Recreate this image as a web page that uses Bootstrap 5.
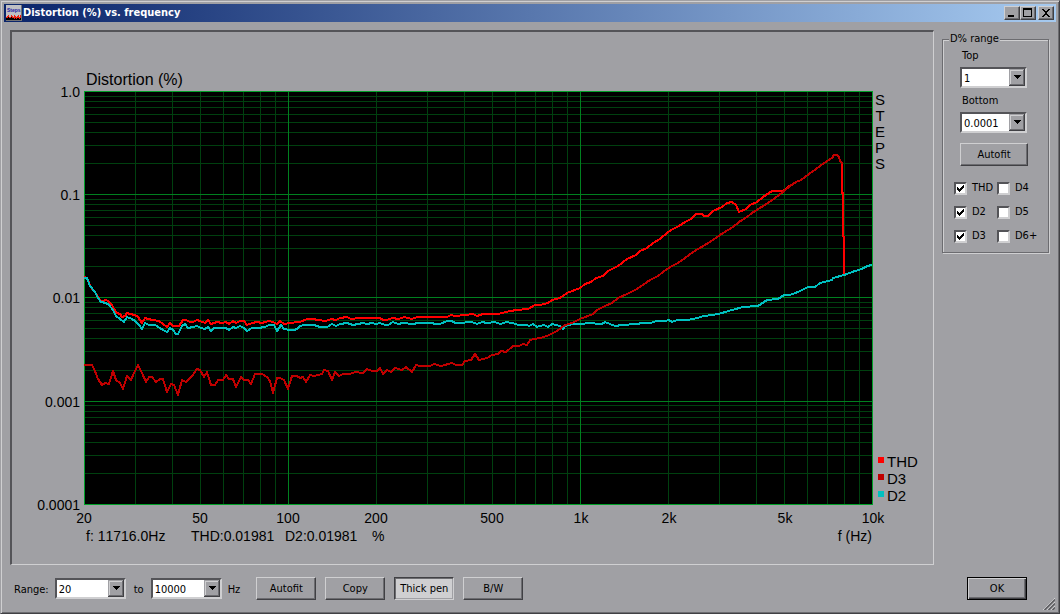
<!DOCTYPE html>
<html lang="en">
<head>
<meta charset="utf-8">
<meta name="viewport" content="width=device-width, initial-scale=1">
<title>Distortion (%) vs. frequency</title>
<link href="https://cdn.jsdelivr.net/npm/bootstrap@5.3.0/dist/css/bootstrap.min.css" rel="stylesheet">
<style>
  :root { --face: #a0a0a4; --light: #cfcfd1; --shade: #6c6c70; --dark: #404044; }
  body {
    background: var(--face); color: #000;
    font-family: "DejaVu Sans Condensed", "DejaVu Sans", sans-serif;
    font-size: 11px; line-height: 14px;
    border: 1px solid; border-color: var(--face) var(--dark) var(--dark) var(--face);
    box-shadow: inset 1px 1px 0 var(--light), inset -1px -1px 0 var(--shade);
    padding: 3px;
  }
  .titlebar { height: 18px; padding: 0 2px; background: linear-gradient(to right, #0a246a, #a6caf0); }
  .titlebar h1 { font-size: 11px; line-height: 18px; font-weight: 700; color: #fff; margin: 0 0 0 1px; }
  .btn-face {
    background: var(--face); color: #000; border: 1px solid; border-radius: 0; padding: 0;
    border-color: var(--light) var(--dark) var(--dark) var(--light);
    box-shadow: inset -1px -1px 0 var(--shade); font-size: 11px; line-height: 14px;
  }
  .cap-btn { width: 16px; height: 14px; }
  .cap-btn svg { display: block; }
  .cap-close { margin-left: 2px; }
  .push { width: 60px; height: 23px; }
  .push.active {
    background: var(--light);
    border-color: var(--dark) var(--light) var(--light) var(--dark);
    box-shadow: inset 1px 1px 0 var(--shade), inset -1px -1px 0 var(--face);
  }
  .push.standard { border-color: #000; box-shadow: inset 1px 1px 0 var(--light), inset -1px -1px 0 var(--dark), inset -2px -2px 0 var(--shade); }
  .plot {
    border: solid; border-width: 2px 1px 1px 2px;
    border-color: #545458 var(--light) var(--light) #545458; min-width: 0;
  }
  .plot svg { font-family: "Liberation Sans", Arial, sans-serif; font-size: 14px; font-kerning: none; }
  .plot .caption { font-size: 16px; }
  .plot .legend-text { font-size: 15px; }
  .content-row { gap: 8px; padding: 8px 7px 0 6px; }
  .side { width: 107px; margin-top: 2px; }
  .group { border: 1px solid var(--shade); box-shadow: 1px 1px 0 var(--light), inset 1px 1px 0 var(--light); padding: 3px 11px 9px; }
  .group legend { float: none; width: auto; margin: 0 0 0 -5px; padding: 0 1px; font-size: 11px; line-height: 14px; background: var(--face); }
  .combo {
    appearance: none; border: 2px solid; border-radius: 0; outline: none;
    border-color: #545458 var(--light) var(--light) #545458;
    color: #000; font-size: 11px; line-height: 14px; height: 21px; width: 71px; padding: 2px 17px 0 2px;
    background: #fff url("data:image/svg+xml,%3Csvg xmlns='http://www.w3.org/2000/svg' width='16' height='17' shape-rendering='crispEdges'%3E%3Cpath fill='%23a0a0a4' d='M0 0h16v17H0z'/%3E%3Cpath fill='%23cfcfd1' d='M1 1h13v1H2v13H1z'/%3E%3Cpath fill='%236c6c70' d='M14 1h1v15H1v-1h13z'/%3E%3Cpath fill='%23404044' d='M15 0h1v17H0v-1h15z'/%3E%3Cpath d='M5 6h7v1H5zM6 7h5v1H6zM7 8h3v1H7zM8 9h1v1H8z'/%3E%3C/svg%3E") no-repeat right center;
  }
  .side-controls { padding: 0 6px; }
  .side-controls label { margin-bottom: 4px; padding-left: 2px; }
  .side-controls .combo { width: 67px; margin-bottom: 6px; }
  .side-controls .push { width: 68px; margin-top: 4px; }
  .ticks { display: grid; grid-template-columns: 43px auto; row-gap: 10px; margin: 15px -6px 0 0; }
  .ticks label { gap: 5px; }
  .tick {
    appearance: none; width: 13px; height: 13px; margin: 0; flex: none; background: #fff center no-repeat;
    border: 2px solid; border-color: #545458 var(--light) var(--light) #545458;
  }
  .tick:checked { background-image: url("data:image/svg+xml,%3Csvg xmlns='http://www.w3.org/2000/svg' width='9' height='9' shape-rendering='crispEdges'%3E%3Cpath d='M1 3h1v3H1zM2 4h1v3H2zM3 5h1v3H3zM4 4h1v3H4zM5 3h1v3H5zM6 2h1v3H6zM7 1h1v3H7z'/%3E%3C/svg%3E"); }
  .toolbar { padding: 12px 29px 0 10px; }
  .range { gap: 6px; }
  .range label[for="until"] { margin: 0 1px 0 2px; }
  .range label, .range span { padding-top: 2px; }
  .actions { gap: 9px; margin-left: 16px; }
  .grip { position: absolute; right: 4px; bottom: 3px; }
</style>
</head>
<body class="min-vh-100 position-relative">
<header class="titlebar d-flex align-items-center">
  <svg width="16" height="16" viewBox="0 0 16 16" aria-hidden="true">
    <path fill="#c0c0c4" d="M0 0h16v16H0z"/>
    <text x="1" y="7" font-family="Liberation Sans" font-size="5" font-weight="700" fill="#2020a0">Steps</text>
    <path fill="#000" d="M0 12h15v3H0z"/>
    <path fill="#f02010" d="M0 12h1v-1h1v-1h1v2h2v-2h1v1h1v1h1v-2h1v1h1v1h1v-1h1v-1h1v2h1v-2h1v3h-1v1h-1v-1h-2v1h-1v-1H9v1H8v-1H6v-1H5v1H3v-1H2v1H0z"/>
    <path fill="none" stroke="#707074" shape-rendering="crispEdges" d="M0 15.500h15.500V0"/>
  </svg>
  <h1 class="flex-grow-1">Distortion (%) vs. frequency</h1>
  <button type="button" class="btn-face cap-btn" aria-label="Minimize"><svg width="14" height="12" shape-rendering="crispEdges"><path d="M3 8h6v2H3z"/></svg></button>
  <button type="button" class="btn-face cap-btn" aria-label="Maximize"><svg width="14" height="12" shape-rendering="crispEdges"><path fill-rule="evenodd" d="M2 1h9v9H2zM3 3v6h7V3z"/></svg></button>
  <button type="button" class="btn-face cap-btn cap-close" aria-label="Close"><svg width="14" height="12" shape-rendering="crispEdges"><path d="M3 2h2v1h1v1h2V3h1V2h2v1h-1v1H9v1H8v2h1v1h1v1h1v1H9V9H8V8H6v1H5v1H3V9h1V8h1V7h1V5H5V4H4V3H3z"/></svg></button>
</header>

<main class="content-row d-flex align-items-start">
  <section class="plot flex-grow-1">
    <svg class="d-block w-100 h-auto" viewBox="12 32 921 532" role="img" aria-label="Distortion versus frequency">
      <path d="M84 91h789v414H84z"/>
      <g id="grid" shape-rendering="crispEdges" fill="none"></g>
      <g id="traces" shape-rendering="crispEdges" fill="none" stroke-width="2" stroke-linejoin="round" stroke-linecap="square"></g>
      <text class="caption" x="86" y="85">Distortion (%)</text>
      <g text-anchor="end">
        <text x="80" y="97">1.0</text><text x="80" y="200">0.1</text><text x="80" y="303">0.01</text>
        <text x="80" y="407">0.001</text><text x="80" y="510">0.0001</text>
      </g>
      <g text-anchor="middle">
        <text x="84" y="523">20</text><text x="200" y="523">50</text><text x="288" y="523">100</text>
        <text x="376" y="523">200</text><text x="492" y="523">500</text><text x="581" y="523">1k</text>
        <text x="669" y="523">2k</text><text x="785" y="523">5k</text><text x="873" y="523">10k</text>
      </g>
      <text x="86" y="541">f: 11716.0Hz</text>
      <text x="191" y="541">THD:0.01981</text>
      <text x="285" y="541">D2:0.01981</text>
      <text x="372" y="541">%</text>
      <text x="872" y="541" text-anchor="end">f (Hz)</text>
      <g class="legend-text" text-anchor="middle">
        <text x="880" y="105">S</text><text x="880" y="121">T</text><text x="880" y="137">E</text>
        <text x="880" y="153">P</text><text x="880" y="169">S</text>
      </g>
      <g class="legend-text">
        <path fill="#f00" d="M878 457h6v6h-6z"/><text x="887" y="467">THD</text>
        <path fill="#c00000" d="M878 474h6v6h-6z"/><text x="887" y="484">D3</text>
        <path fill="#00c0c0" d="M878 491h6v6h-6z"/><text x="887" y="501">D2</text>
      </g>
    </svg>
  </section>

  <aside class="side flex-shrink-0">
    <fieldset class="group">
      <legend>D% range</legend>
      <div class="side-controls d-flex flex-column">
        <label for="top">Top</label>
        <select id="top" class="combo"><option>1</option></select>
        <label for="bottom">Bottom</label>
        <select id="bottom" class="combo"><option>0.0001</option></select>
        <button type="button" class="btn-face push">Autofit</button>
      </div>
      <div class="ticks">
        <label class="d-flex align-items-center"><input class="tick" type="checkbox" checked><span>THD</span></label>
        <label class="d-flex align-items-center"><input class="tick" type="checkbox"><span>D4</span></label>
        <label class="d-flex align-items-center"><input class="tick" type="checkbox" checked><span>D2</span></label>
        <label class="d-flex align-items-center"><input class="tick" type="checkbox"><span>D5</span></label>
        <label class="d-flex align-items-center"><input class="tick" type="checkbox" checked><span>D3</span></label>
        <label class="d-flex align-items-center"><input class="tick" type="checkbox"><span>D6+</span></label>
      </div>
    </fieldset>
  </aside>
</main>

<footer class="toolbar d-flex align-items-center">
  <div class="range d-flex align-items-center">
    <label for="from">Range:</label>
    <select id="from" class="combo"><option>20</option></select>
    <label for="until">to</label>
    <select id="until" class="combo"><option>10000</option></select>
    <span>Hz</span>
  </div>
  <div class="actions d-flex flex-grow-1">
    <button type="button" class="btn-face push">Autofit</button>
    <button type="button" class="btn-face push">Copy</button>
    <button type="button" class="btn-face push active" aria-pressed="true">Thick pen</button>
    <button type="button" class="btn-face push">B/W</button>
  </div>
  <button type="button" class="btn-face push standard">OK</button>
</footer>
<svg class="grip" width="12" height="12" aria-hidden="true">
  <path d="M0 12L12 0M4 12l8-8M8 12l4-4" stroke="#cfcfd1"/><path d="M1.500 12L12 1.500M5.500 12L12 5.500M9.500 12L12 9.500" stroke="#5c5c60" stroke-width="1.500"/>
</svg>

<script src="https://cdn.jsdelivr.net/npm/bootstrap@5.3.0/dist/js/bootstrap.bundle.min.js"></script>
<script>
  const NS = 'http://www.w3.org/2000/svg';
  const add = (id, d, stroke) => {
    const p = document.createElementNS(NS, 'path');
    p.setAttribute('d', d); p.setAttribute('stroke', stroke);
    document.getElementById(id).append(p);
  };

  // Logarithmic grid: 20 Hz..10 kHz across, 0.0001..1 % upwards.
  const xAt = f => Math.round(288 + 292 * Math.log10(f / 100)) + 0.5;
  const yAt = v => Math.round(90.9 - 103.25 * Math.log10(v)) + 0.5;
  let minor = '', major = '';
  for (const dec of [10, 100, 1000]) for (let n = 1; n < 10; n++) {
    const f = dec * n, line = `M${xAt(f)} 91V505`;
    if (f <= 20) continue;
    if (n === 1) major += line; else minor += line;
  }
  for (const dec of [1e-4, 1e-3, 1e-2, 1e-1]) for (let n = 1; n < 10; n++) {
    const line = `M84 ${yAt(dec * n)}H873`;
    if (n === 1) major += line; else minor += line;
  }
  add('grid', minor, '#00400f');
  add('grid', major, '#00801f');
  add('grid', 'M84.500 91.500H872.500V504.500H84.500Z', '#00a028');

  // Each trace is a list of runs: [origin x, origin y, samples in thirds of a unit].
  const traces = {
    THD: ['#ff0000',
      [80, 260, '15,52 22,54 30,75 37,87 45,95 54,112 62,122 68,122 77,119 85,123 95,135 102,147 110,158 120,163 127,170 135,169 141,158 150,162 165,166 175,172 187,188 195,174 205,178 220,181 237,183 250,192 262,201 270,188 280,197 298,197 308,180 318,181 330,186 340,185 350,180 360,184 374,188 383,180 393,191 410,186 425,188 438,186 448,191 459,183 468,188 481,183 491,183 502,194 515,189 530,186 545,188 555,187 567,182 580,187 591,192 601,182 612,191 630,188 655,187'],
      [280, 290, '60,97 80,87 100,88 115,91 138,93 152,86 168,90 180,84 200,81 212,87 240,84 300,84 310,90 322,90 335,83 357,87 372,80 395,87 412,81 500,80 512,74 525,78 555,76 580,72 592,78 608,72 655,72 690,62 710,59 745,57 765,45 778,44'],
      [540, 180, '0,374 25,368 35,360 60,354 80,340 121,323 135,313 152,307 168,294 188,289 205,274 235,257 262,237 288,225 300,214 320,205 340,188 360,178 385,156 400,147 418,138 435,125 452,117 468,102 485,101 493,108 505,107 520,94 545,82 560,68 575,66 587,76 597,97 617,87 630,76 650,66 670,51 697,33 730,33 745,21 768,6 782,0'],
      [820, 80, '0,258 20,242 35,233 42,225 50,225 56,231 61,243 66,250 67,340 69,340 69,468 72,470 72,585']],
    D2: ['#00c0c0',
      [80, 260, '15,53 22,55 30,78 45,97 53,113 62,127 78,128 88,136 98,150 108,168 120,176 131,187 141,170 155,176 165,183 177,194 187,207 196,189 207,195 225,195 240,203 250,211 262,216 270,203 280,211 287,222 295,222 305,198 316,191 325,203 340,202 350,197 362,203 374,207 383,200 393,212 403,204 420,203 437,205 448,210 458,200 468,205 481,198 493,203 502,213 515,205 535,203 555,202 567,194 581,194 592,213 602,195 612,207 630,210 645,210 655,203'],
      [280, 290, '60,108 72,104 102,105 120,111 140,110 155,101 167,107 180,101 202,98 218,105 233,103 248,98 260,103 275,98 288,102 300,98 315,105 325,104 338,95 355,101 370,98 400,102 415,99 455,98 465,102 480,101 500,93 515,93 525,99 550,98 560,95 575,97 592,102 607,95 620,99 645,95 660,103 680,95 707,101 715,105 740,105 747,108 760,101 772,111 778,109'],
      [540, 180, '0,437 12,434 25,441 35,431 60,438 68,446 75,437 98,431 125,432 145,428 185,431 196,426 210,431 225,438 245,434 290,433 305,429 330,428 350,423 375,423 388,419 397,426 410,421 440,419 475,414 490,408 520,406 545,400 575,390 610,381 655,377 680,361 715,357 733,346 750,345 775,336 805,322 825,320 840,309 875,299 880,294 912,286 945,272 965,267 975,261 994,255']],
    D3: ['#c00000',
      [80, 260, '15,314 37,314 44,332 55,357 65,375 75,369 88,373 99,332 109,359 120,370 130,387 142,347 152,360 163,339 175,314 185,340 197,367 207,350 217,351 229,366 240,358 250,357 262,396 272,372 283,376 295,405 307,361 317,367 335,349 350,326 361,330 373,350 382,336 393,375 405,374 414,360 428,360 437,344 448,356 460,356 469,381 482,350 493,359 503,361 514,373 526,343 546,342 560,352 570,362 580,399 591,353 598,353'],
      [280, 290, '0,264 12,270 25,297 35,258 50,259 60,264 68,260 78,276 90,254 102,259 125,252 133,240 145,243 157,271 166,245 178,259 190,253 210,251 225,245 248,249 262,237 275,242 290,243 300,235 310,253 322,240 332,246 345,235 365,239 378,231 397,247 409,225 420,228 450,227 462,221 482,228 515,219 528,225 545,224 555,214 573,210 585,191 596,210 620,203 635,196 655,191 662,183 678,186 700,169 718,167 728,161 740,164 750,151 778,144'],
      [540, 180, '0,474 20,468 50,453 75,435 95,430 121,417 158,403 172,391 195,377 215,368 235,354 260,343 290,326 330,299 355,287 370,275 390,262 415,249 435,234 460,217 475,206 510,187 550,158 580,141 597,125 620,112 635,99 685,69 705,53 730,35 750,19 768,7 782,0'],
      [820, 80, '0,258 20,242 35,233 42,225 50,225 56,231 61,243 66,250']]
  };
  for (const [colour, ...runs] of Object.values(traces)) {
    const pts = runs.flatMap(([ox, oy, s]) => s.split(' ').map(p => {
      const [x, y] = p.split(',').map(Number);
      return `${Math.round(ox + x / 3)} ${Math.round(oy + y / 3)}`;
    }));
    add('traces', 'M' + pts.join('L'), colour);
  }
</script>
</body>
</html>
